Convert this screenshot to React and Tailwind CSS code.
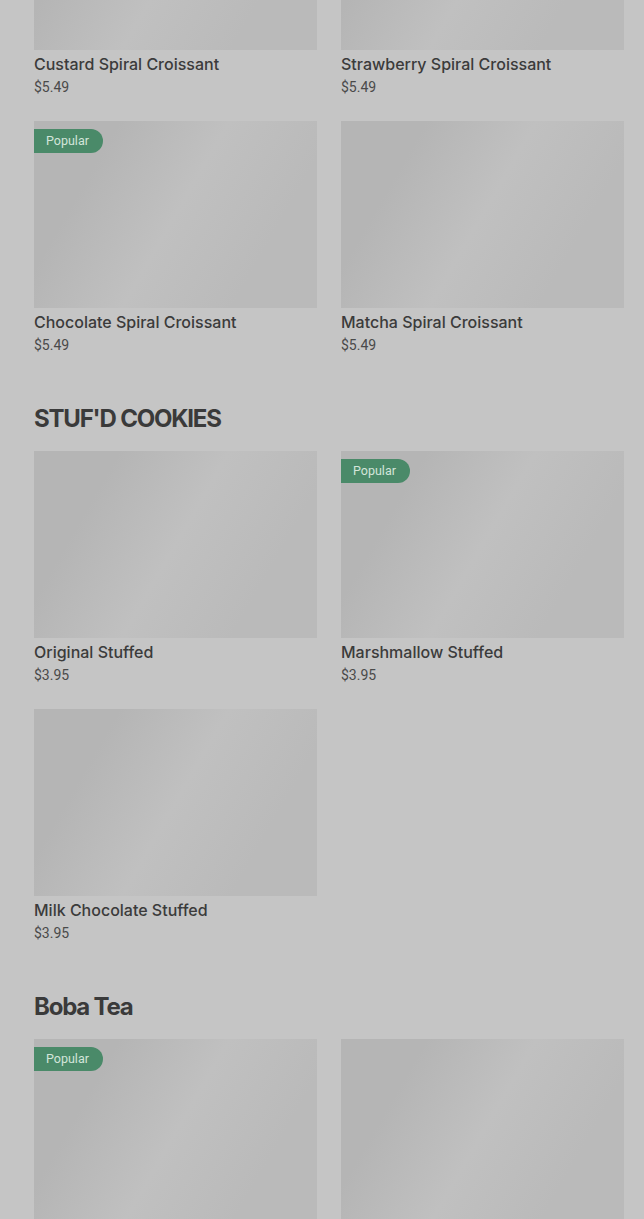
import React from 'react'

const sections = [
  {
    title: null,
    items: [
      { name: 'Custard Spiral Croissant', price: '$5.49' },
      { name: 'Strawberry Spiral Croissant', price: '$5.49' },
      { name: 'Chocolate Spiral Croissant', price: '$5.49', popular: true },
      { name: 'Matcha Spiral Croissant', price: '$5.49' },
    ],
  },
  {
    title: "STUF'D COOKIES",
    items: [
      { name: 'Original Stuffed', price: '$3.95' },
      { name: 'Marshmallow Stuffed', price: '$3.95', popular: true },
      { name: 'Milk Chocolate Stuffed', price: '$3.95' },
    ],
  },
  {
    title: 'Boba Tea',
    items: [
      // below the fold, only the images show
      { name: '', price: '', popular: true },
      { name: '', price: '' },
    ],
  },
]

const ProductCard = ({ item }) => (
  <div className="flex flex-col">
    <div className="relative h-[187px] bg-[linear-gradient(120deg,#b5b5b5_22%,#c0c0c0_50%,#bababa_78%)]">
      {item.popular && (
        <span className="absolute left-0 top-2 flex h-6 items-center rounded-r-full bg-[#4a8a69] pl-3 pr-[14px] text-[12.5px] text-[#d3e5da]">
          Popular
        </span>
      )}
    </div>
    {item.name && (
      <>
        <p className="mt-[2px] font-['Inter',sans-serif] text-base font-medium leading-6 text-[#3b3b3b]">
          {item.name}
        </p>
        <p className="mt-px text-sm leading-5 text-[#4a4a4a]">{item.price}</p>
      </>
    )}
  </div>
)

const App = () => {
  return (
    <div className="h-[1219px] overflow-hidden bg-[#c5c5c5] font-['Roboto',sans-serif]">
      <div className="-mt-[137px] flex flex-col gap-[47px] pl-[34px] pr-5">
        {sections.map((section, i) => (
          <div key={i} className="flex flex-col gap-4">
            {section.title && (
              <h2 className="mt-px font-['Inter',sans-serif] text-2xl font-bold leading-8 tracking-[-0.05em] text-[#3a3a3a]">
                {section.title}
              </h2>
            )}
            <div className="grid grid-cols-2 gap-x-6 gap-y-6">
              {section.items.map((item, j) => (
                <ProductCard key={j} item={item} />
              ))}
            </div>
          </div>
        ))}
      </div>
    </div>
  )
}

export default App
